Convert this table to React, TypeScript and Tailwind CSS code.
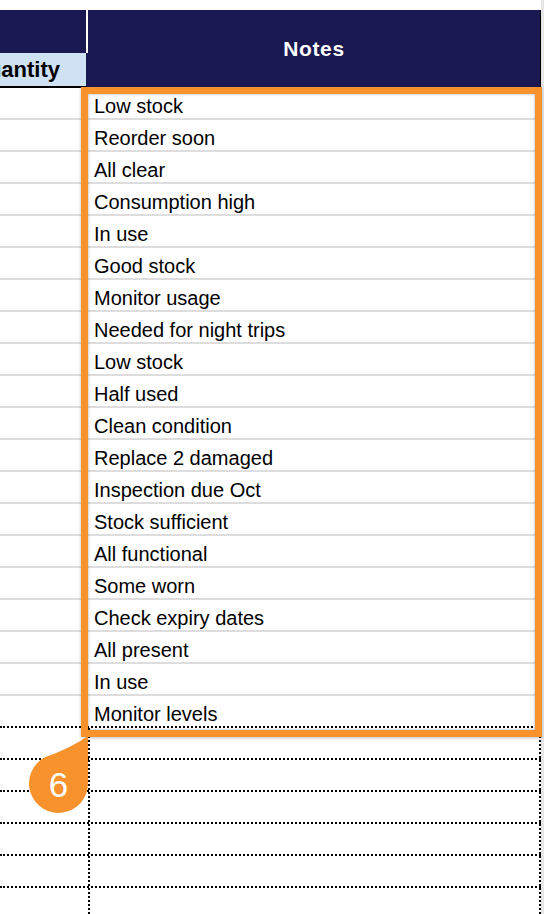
const notes = [
  "Low stock",
  "Reorder soon",
  "All clear",
  "Consumption high",
  "In use",
  "Good stock",
  "Monitor usage",
  "Needed for night trips",
  "Low stock",
  "Half used",
  "Clean condition",
  "Replace 2 damaged",
  "Inspection due Oct",
  "Stock sufficient",
  "All functional",
  "Some worn",
  "Check expiry dates",
  "All present",
  "In use",
  "Monitor levels",
];

function Badge() {
  return (
    <>
      <svg
        className="absolute left-[25px] top-[732px]"
        width="68"
        height="85"
        viewBox="0 0 68 85"
      >
        <path
          d="M63 4 L63 51.5 A29.5 29.5 0 1 1 20.4 25 Q44 17 63 4 Z"
          fill="#f7922c"
        />
      </svg>
      <div className="absolute left-[29px] top-[755px] flex h-[59px] w-[59px] items-center justify-center text-[35px] leading-none text-white">
        6
      </div>
    </>
  );
}

export default function App() {
  return (
    <div
      className="relative flex h-[914px] w-[544px] overflow-hidden bg-white text-black"
      style={{ fontFamily: '"Liberation Sans", Arial, sans-serif' }}
    >
      <div className="w-[541px] pt-[10px]">
        {/* header */}
        <div className="flex h-[78px]">
          <div className="flex w-[88px] flex-col">
            <div className="h-[43px] border-r-2 border-white bg-[#191850]" />
            <div className="flex h-[35px] items-center justify-end overflow-hidden whitespace-nowrap border-b-2 border-r-2 border-b-black border-r-[#191850] bg-[#cfe2f3] pr-[26px] text-[22px] font-bold">
              Quantity
            </div>
          </div>
          <div className="flex w-[453px] items-center justify-center border-r border-black bg-[#191850] text-[21px] font-bold tracking-[0.6px] text-white">
            Notes
          </div>
        </div>

        {/* rows */}
        {notes.map((n, i) => (
          <div
            key={i}
            className={
              i === notes.length - 1
                ? "flex h-8 border-b-2 border-dotted border-black"
                : "flex h-8 border-b-2 border-[#dddddd]"
            }
          >
            <div className="w-[88px]" />
            <div className="w-[453px] whitespace-nowrap pl-[6px] pt-[5px] text-[20px] leading-[26px]">
              {n}
            </div>
          </div>
        ))}
        {[0, 1, 2, 3, 4, 5].map((i) => (
          <div key={i} className="flex h-8 border-b-2 border-dotted border-black">
            <div className="w-[88px]" />
            <div className="w-[453px] border-x-2 border-dotted border-black" />
          </div>
        ))}
      </div>
      <div className="w-[3px] bg-[#e6e6e6]" />

      {/* highlight */}
      <div className="absolute left-[81px] top-[87px] h-[650px] w-[461px] border-[7px] border-[#f7922c] shadow-[inset_0_0_3px_rgba(0,0,0,0.35),0_1px_3px_rgba(0,0,0,0.25)]" />
      <Badge />
    </div>
  );
}
